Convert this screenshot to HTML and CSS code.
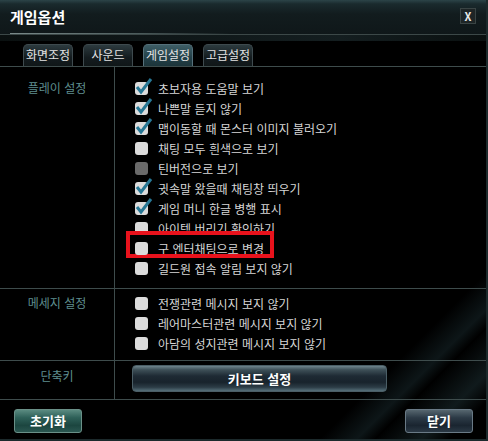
FILE: index.html
```html
<!DOCTYPE html>
<html lang="ko">
<head>
    <meta charset="UTF-8">
    <title>게임옵션</title>
    <link rel="stylesheet" href="styles.css">
</head>
<body>
    <div class="window">
        <div class="title-bar">
            <div class="title">게임옵션</div>
            <div class="close-btn">X</div>
        </div>
        <div class="title-band"></div>

        <div class="tabs">
            <div class="tab">화면조정</div>
            <div class="tab">사운드</div>
            <div class="tab active">게임설정</div>
            <div class="tab">고급설정</div>
        </div>

        <div class="section play">
            <div class="label">플레이 설정</div>
            <div class="items">
                <div class="item"><span class="box checked"></span>초보자용 도움말 보기</div>
                <div class="item"><span class="box checked"></span>나쁜말 듣지 않기</div>
                <div class="item"><span class="box checked"></span>맵이동할 때 몬스터 이미지 불러오기</div>
                <div class="item"><span class="box"></span>채팅 모두 흰색으로 보기</div>
                <div class="item"><span class="box disabled"></span>틴버전으로 보기</div>
                <div class="item"><span class="box checked"></span>귓속말 왔을때 채팅창 띄우기</div>
                <div class="item"><span class="box checked"></span>게임 머니 한글 병행 표시</div>
                <div class="item"><span class="box"></span>아이템 버리기 확인하기</div>
                <div class="item marked"><span class="box"></span>구 엔터채팅으로 변경</div>
                <div class="item"><span class="box"></span>길드원 접속 알림 보지 않기</div>
            </div>
        </div>

        <div class="section msg">
            <div class="label">메세지 설정</div>
            <div class="items">
                <div class="item"><span class="box"></span>전쟁관련 메시지 보지 않기</div>
                <div class="item"><span class="box"></span>레어마스터관련 메시지 보지 않기</div>
                <div class="item"><span class="box"></span>아담의 성지관련 메시지 보지 않기</div>
            </div>
        </div>

        <div class="section keys">
            <div class="label">단축키</div>
            <div class="items">
                <div class="key-btn">키보드 설정</div>
            </div>
        </div>

        <div class="footer">
            <div class="btn reset">초기화</div>
            <div class="btn close">닫기</div>
        </div>
    </div>
</body>
</html>
```

FILE: styles.css
```css
body {
    margin: 0;
    background: #000;
    font-family: 'Noto Sans CJK KR', 'Noto Sans', sans-serif;
    font-size: 12px;
}

.window {
    width: 488px;
    height: 441px;
    box-sizing: border-box;
    border-right: 2px solid #1c2a2c;
    border-bottom: 2px solid #1c2a2c;
    position: relative;
    overflow: hidden;
    background: linear-gradient(135deg, #000 0%, #000 82%, #0d1618 86%, #000 88%, #101a1c 93%, #000 96%);
}

.title-bar {
    height: 35px;
    box-sizing: border-box;
    padding: 0 10px;
    display: flex;
    align-items: center;
    justify-content: space-between;
    background: linear-gradient(180deg, #2c4448 0px, #1a2a2d 4px, #121c1e 14px, #0f1719 35px);
    border-bottom: 1px solid #3c4848;
}

.title {
    color: #fff;
    font-weight: bold;
    font-size: 15px;
    line-height: 18px;
    padding-top: 2px;
    padding-bottom: 7px;
    width: 220px;
    border-bottom: 1px solid;
    border-image: linear-gradient(90deg, #7a8a8a, #4a5a5a 60%, transparent) 1;
    margin-top: 5px;
}

.close-btn {
    width: 14px;
    height: 14px;
    background: #1e2526;
    border: 1px solid #3a4444;
    color: #e8e8e8;
    font-weight: bold;
    font-size: 11px;
    line-height: 14px;
    text-align: center;
    margin-top: -3px;
}

.title-band {
    height: 6px;
    background: linear-gradient(90deg, #0a1010, #141e20 70%, #0a1010);
}

.tabs {
    display: flex;
    gap: 10px;
    padding: 3px 0 0 23px;
    height: 26px;
    box-sizing: border-box;
    align-items: flex-end;
    border-bottom: 1px solid #3e4c4c;
}

.tab {
    width: 50px;
    height: 22px;
    box-sizing: border-box;
    border: 1px solid #3e4a4e;
    border-bottom: none;
    border-radius: 5px 5px 0 0;
    background: linear-gradient(180deg, #2c3a3e, #141c1f 60%, #101618);
    color: #e4e4e4;
    text-align: center;
    line-height: 20px;
}

.tab.active {
    background: linear-gradient(180deg, #3e5e66, #234048 60%, #1c343a);
    border-color: #55707a;
}

.section {
    display: flex;
    border-bottom: 1px solid #3e4c4c;
}

.label {
    width: 115px;
    flex-shrink: 0;
    box-sizing: border-box;
    border-right: 1px solid #3e4c4c;
    text-align: center;
    color: #5f8e8f;
    line-height: 20px;
}

.items {
    flex: 1;
    padding-left: 20px;
}

.play .label, .play .items {
    padding-top: 11px;
    padding-bottom: 10px;
}

.msg .label, .msg .items {
    padding-top: 4px;
    padding-bottom: 7px;
}

.keys .label {
    padding-top: 5px;
    padding-bottom: 13px;
}

.keys .items {
    padding-left: 17px;
    padding-top: 4px;
    padding-bottom: 5px;
}

.item {
    display: flex;
    align-items: center;
    height: 20px;
    color: #d6d6d6;
    position: relative;
}

.box {
    width: 13px;
    height: 13px;
    border-radius: 3px;
    background: #dcdcdc;
    margin-right: 10px;
    position: relative;
    flex-shrink: 0;
}

.box.disabled {
    background: #6a6a6a;
}

.box.checked::after {
    content: '';
    position: absolute;
    left: 0;
    top: -5px;
    width: 18px;
    height: 18px;
    background: url("data:image/svg+xml,%3Csvg xmlns='http://www.w3.org/2000/svg' width='18' height='18'%3E%3Cpolyline points='2,10 6,15 16,2' fill='none' stroke='%23287896' stroke-width='3'/%3E%3C/svg%3E") no-repeat;
}

.item.marked::before {
    content: '';
    position: absolute;
    left: -9px;
    top: -7px;
    width: 148px;
    height: 27px;
    border: 4px solid #e8121c;
    box-sizing: border-box;
}

.key-btn {
    width: 255px;
    height: 27px;
    box-sizing: border-box;
    border-radius: 4px;
    border: 1px solid #4b5e66;
    background: linear-gradient(180deg, #6e848c 0%, #3e5058 15%, #1e2a34 40%, #18232c 65%, #2c3c46 85%, #56707a 100%);
    color: #fff;
    font-weight: bold;
    font-size: 13px;
    text-align: center;
    line-height: 25px;
}

.footer {
    display: flex;
    justify-content: space-between;
    padding: 9px 13px 0 14px;
}

.btn {
    width: 68px;
    height: 24px;
    box-sizing: border-box;
    border-radius: 3px;
    color: #fff;
    font-weight: bold;
    font-size: 13px;
    text-align: center;
    line-height: 22px;
}

.btn.reset {
    border: 1px solid #6a9088;
    background: linear-gradient(180deg, #5a8a80 0%, #2e6058 35%, #1c4640 70%, #2a5650 100%);
}

.btn.close {
    border: 1px solid #6a7a86;
    background: linear-gradient(180deg, #56666f 0%, #2c3a46 35%, #1a2530 70%, #2a3844 100%);
}
```
